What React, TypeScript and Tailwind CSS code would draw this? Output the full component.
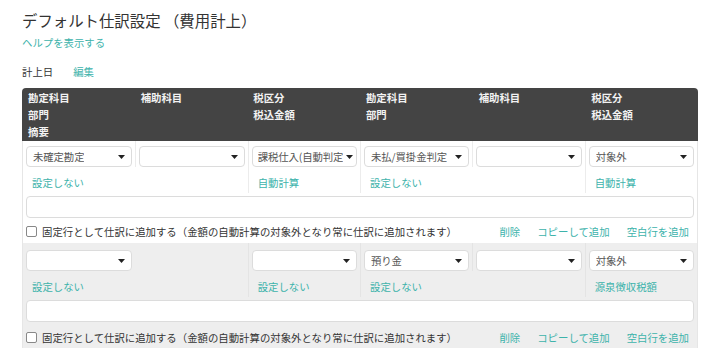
import React from "react";

const TEAL = "text-[#3db3ab]";

type Cell = { select: string | null; link?: string; shortBorder?: boolean; fullBorder?: boolean; tight?: boolean };

function Caret() {
  return (
    <svg width="7" height="4" viewBox="0 0 7 4" className="shrink-0">
      <path d="M0 0 L7 0 L3.5 4 Z" fill="#222" />
    </svg>
  );
}

function Select({ value, tight }: { value: string; tight?: boolean }) {
  return (
    <div
      className={`h-[21px] flex items-center justify-between bg-white border border-[#dcdcdc] rounded-[4px] ${
        tight ? "pl-[5px] pr-[3px] gap-0" : "pl-[6px] pr-[6px] gap-[1px]"
      }`}
    >
      <span className="overflow-hidden whitespace-nowrap text-[#555] text-[10.4px] leading-[17px] tracking-[-0.1px]">{value}</span>
      <Caret />
    </div>
  );
}

function EntryRow({
  cells,
  bg,
  sep,
  padTop,
  checkTop,
  checkBottom,
}: {
  cells: Cell[];
  bg: string;
  sep: string;
  padTop: string;
  checkTop: string;
  checkBottom: string;
}) {
  return (
    <div className={bg}>
      <div className="grid grid-cols-6">
        {cells.map((c, i) => (
          <div key={i} className={`flex flex-col ${c.fullBorder ? `border-l ${sep}` : ""}`}>
            <div className={`${padTop} px-[3px] h-[21px] box-content ${c.shortBorder ? `border-l ${sep}` : ""}`}>
              {c.select !== null ? <Select value={c.select} tight={c.tight} /> : null}
            </div>
            <div className={`pt-[7px] h-[26px] box-border pl-[9px] text-[10.4px] leading-[17px] ${TEAL} whitespace-nowrap`}>
              {c.link ?? ""}
            </div>
          </div>
        ))}
      </div>
      <div className="mt-[3px] mx-[3px] h-[22px] bg-white border border-[#dcdcdc] rounded-[4px]" />
      <div className={`flex items-center justify-between pl-[3px] pr-[8px] ${checkTop} ${checkBottom}`}>
        <div className="flex items-center gap-[5px] text-[10.4px] leading-[17px] text-[#333]">
          <span className="w-[11px] h-[11px] bg-white border border-[#888] rounded-[2px] inline-block" />
          <span>固定行として仕訳に追加する（金額の自動計算の対象外となり常に仕訳に追加されます）</span>
        </div>
        <div className={`flex items-center gap-[17px] text-[10.4px] leading-[17px] ${TEAL}`}>
          <span>削除</span>
          <span>コピーして追加</span>
          <span>空白行を追加</span>
        </div>
      </div>
    </div>
  );
}

export default function App() {
  const font = { fontFamily: '"Noto Sans CJK JP", "Noto Sans", sans-serif' };
  const row1: Cell[] = [
    { select: "未確定勘定", link: "設定しない" },
    { select: "", shortBorder: true },
    { select: "課税仕入(自動判定", link: "自動計算", fullBorder: true, tight: true },
    { select: "未払/買掛金判定", link: "設定しない", fullBorder: true },
    { select: "", shortBorder: true },
    { select: "対象外", link: "自動計算", fullBorder: true },
  ];
  const row2: Cell[] = [
    { select: "", link: "設定しない" },
    { select: null },
    { select: "", link: "設定しない", fullBorder: true },
    { select: "預り金", link: "設定しない", fullBorder: true },
    { select: "", shortBorder: true },
    { select: "対象外", link: "源泉徴収税額", fullBorder: true },
  ];
  const hdr = [
    ["勘定科目", "部門", "摘要"],
    ["補助科目"],
    ["税区分", "税込金額"],
    ["勘定科目", "部門"],
    ["補助科目"],
    ["税区分", "税込金額"],
  ];
  return (
    <div className="w-[720px] h-[360px] bg-white overflow-hidden" style={font}>
      <div className="pl-[22px] pr-[22px]">
        <div className="pt-[10px] text-[15.4px] leading-[20px] text-[#333]">デフォルト仕訳設定 （費用計上）</div>
        <div className={`mt-[4px] text-[10.4px] leading-[17px] ${TEAL}`}>ヘルプを表示する</div>
        <div className="mt-[12px] flex gap-[20px] text-[10.4px] leading-[17px]">
          <span className="text-[#333]">計上日</span>
          <span className={TEAL}>編集</span>
        </div>
        <div className="mt-[8px] w-[676px]">
          <div className="bg-[#444] rounded-t-[4px] grid grid-cols-6 pt-[1px] pb-[2px] h-[53px]">
            {hdr.map((col, i) => (
              <div key={i} className="pl-[6px] flex flex-col text-[10.4px] leading-[17px] font-bold text-[#f2f2f2]">
                {col.map((t) => (
                  <span key={t}>{t}</span>
                ))}
              </div>
            ))}
          </div>
          <div className="border-x border-[#e6e6e6]">
            <EntryRow
              cells={row1}
              bg="bg-white"
              sep="border-[#ececec]"
              padTop="pt-[5px]"
              checkTop="pt-[5px]"
              checkBottom="pb-[3px]"
            />
            <EntryRow
              cells={row2}
              bg="bg-[#eeeeee]"
              sep="border-[#e4e4e4]"
              padTop="pt-[7px]"
              checkTop="pt-[7px]"
              checkBottom="pb-[2px]"
            />
          </div>
        </div>
      </div>
    </div>
  );
}
